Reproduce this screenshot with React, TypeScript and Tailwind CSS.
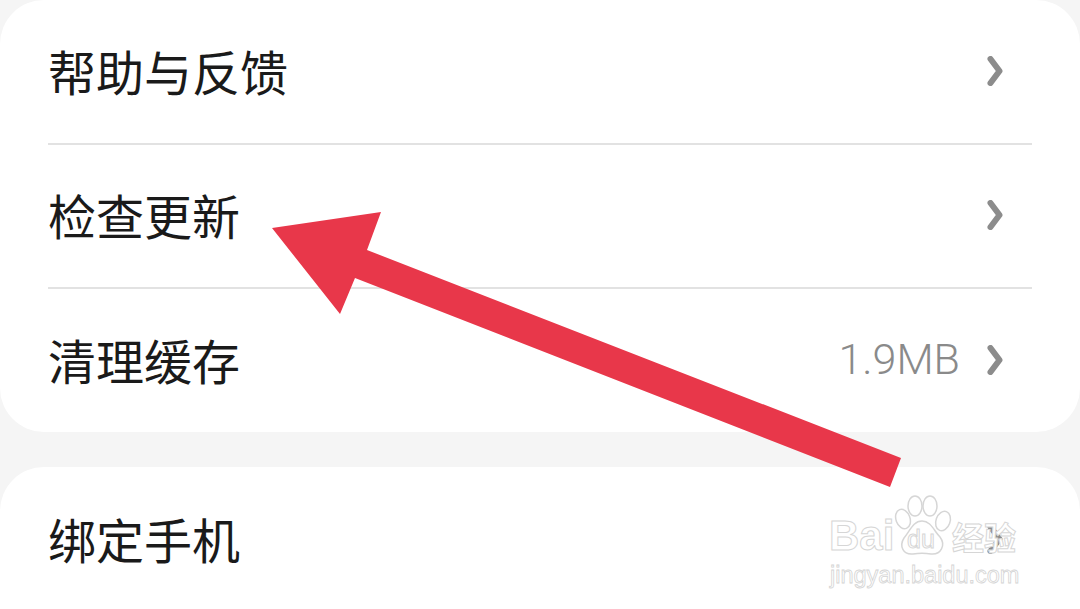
import { ReactNode } from "react";

const FONT = "font-['Noto_Sans_CJK_SC','Noto_Sans',sans-serif]";

// ── Pieces ──────────────────────────────────────────────────────────────────

function Chevron() {
  return (
    <svg width="16" height="30" viewBox="0 0 16 30" aria-hidden className="shrink-0">
      <path
        d="M3.5 3 L12.5 15 L3.5 27"
        fill="none"
        stroke="#8c8c8c"
        strokeWidth="6"
        strokeLinecap="round"
        strokeLinejoin="round"
      />
    </svg>
  );
}

function Row({ label, value, divider, className }: { label: string; value?: ReactNode; divider?: boolean; className: string }) {
  return (
    <div className={`flex items-center justify-between pb-[4px] ${className} ${divider ? "border-b-[2px] border-[#e2e2e2]" : ""}`}>
      <span className="text-[48px] leading-none text-[#1a1a1a] font-normal">{label}</span>
      <div className="flex items-center gap-[27px] pr-[29px] mt-[2px]">
        {value && <span className="font-['Roboto',sans-serif] text-[43px] leading-none font-light text-[#8a8a8a]">{value}</span>}
        <Chevron />
      </div>
    </div>
  );
}

function ArrowOverlay() {
  return (
    <svg className="absolute inset-0" width="1080" height="609" viewBox="0 0 1080 609" aria-hidden>
      <polygon
        points="272,228 381,212 367,250 901,458 890,487 355,278 340,314"
        fill="#e8374a"
      />
    </svg>
  );
}

function Watermark() {
  const outline = "text-white [-webkit-text-stroke:1px_#d6d6d6]";
  return (
    <div className="absolute left-[829px] top-[491px] w-[196px] h-[96px]">
      <div className="flex items-center h-[70px]">
        <span className={`w-[63px] font-['Liberation_Sans',sans-serif] text-[42px] leading-none font-bold pt-[20px] ${outline}`}>Bai</span>
        <div className="relative w-[60px] h-[64px] shrink-0">
          <svg width="60" height="64" viewBox="0 0 60 64" aria-hidden>
            <g fill="#ffffff" stroke="#d6d6d6" strokeWidth="1.5">
              <ellipse cx="11" cy="25" rx="7" ry="10" transform="rotate(-20 11 25)" />
              <ellipse cx="23" cy="12" rx="7" ry="10" />
              <ellipse cx="38" cy="12" rx="7" ry="10" />
              <ellipse cx="51" cy="27" rx="7" ry="10" transform="rotate(20 51 27)" />
              <path d="M30 27 C39 27 42 37 48 43 C54 51 49 61 39 60 C33 59 27 59 21 60 C11 61 7 52 12 44 C18 37 21 27 30 27 Z" />
            </g>
          </svg>
          <span className={`absolute left-[15px] top-[33px] font-['Liberation_Sans',sans-serif] text-[25px] leading-none ${outline}`}>du</span>
        </div>
        <span className={`${FONT} text-[32px] leading-none font-bold pt-[20px] ${outline}`}>经验</span>
      </div>
      <div className="font-['Liberation_Sans',sans-serif] text-[23.5px] leading-none mt-[3px] pl-[1px] text-white [-webkit-text-stroke:0.8px_#d4d4d4]">
        jingyan.baidu.com
      </div>
    </div>
  );
}

// ── App ─────────────────────────────────────────────────────────────────────

export default function App() {
  return (
    <div className={`relative w-[1080px] h-[609px] overflow-hidden bg-[#f5f5f5] ${FONT}`}>
      <div className="flex flex-col gap-[35px]">
        <div className="bg-white rounded-[44px] px-[48px]">
          <Row label="帮助与反馈" divider className="h-[145px]" />
          <Row label="检查更新" divider className="h-[144px]" />
          <Row label="清理缓存" value="1.9MB" className="h-[143px]" />
        </div>
        <div className="bg-white rounded-t-[44px] px-[48px] h-[142px]">
          <Row label="绑定手机" className="h-[146px]" />
        </div>
      </div>
      <ArrowOverlay />
      <Watermark />
    </div>
  );
}
